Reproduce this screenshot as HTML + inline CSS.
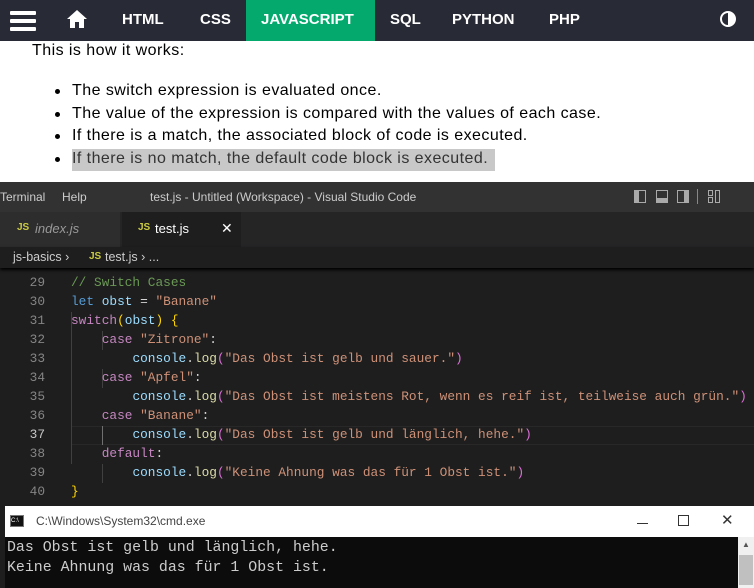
<!DOCTYPE html>
<html><head><meta charset="utf-8"><style>
*{margin:0;padding:0;box-sizing:border-box}
body{width:754px;height:588px;overflow:hidden;background:#fff;font-family:"Liberation Sans",sans-serif;position:relative}
.nav{position:absolute;top:0;left:0;width:754px;height:41px;background:#282A35;color:#fff;font-weight:bold;font-size:15px}
.nav span{position:absolute;top:11px}
.js{position:absolute;left:246px;top:0;width:129px;height:41px;background:#04AA6D}
.txt{position:absolute;font-size:16px;letter-spacing:0.45px;color:#000;white-space:nowrap}
.dot{position:absolute;left:55px;width:5px;height:5px;border-radius:50%;background:#000}
.vs{position:absolute;top:182px;left:0;width:754px;height:406px;background:#1e1e1e}
.title{position:absolute;top:0;left:0;width:754px;height:30px;background:#323233;color:#ccc;font-size:12px}
.tabs{position:absolute;top:30px;left:0;width:754px;height:35px;background:#252526}
.code{position:absolute;font-family:"Liberation Mono",monospace;font-size:12.8px;line-height:19px;white-space:pre;color:#d4d4d4}
.ln{position:absolute;left:20px;width:25px;text-align:right;color:#858585;font-family:"Liberation Mono",monospace;font-size:12.8px;line-height:19px}
.k{color:#c586c0}.b{color:#569cd6}.v{color:#9cdcfe}.s{color:#ce9178}.c{color:#6a9955}.f{color:#dcdcaa}.y{color:#ffd700}.p{color:#da70d6}
</style></head><body>
<div class="nav">
<div style="position:absolute;left:10px;top:11px;width:26px;height:4px;background:#fff;border-radius:1px;box-shadow:0 8px 0 #fff,0 16px 0 #fff"></div>
<svg style="position:absolute;left:66px;top:9px" width="22" height="20" viewBox="0 0 22 20"><path d="M11 1L1 10h3v9h5v-6h4v6h5v-9h3z" fill="#fff"/></svg>
<div class="js"></div>
<span style="left:122px">HTML</span><span style="left:200px">CSS</span><span style="left:261px">JAVASCRIPT</span><span style="left:390px">SQL</span><span style="left:452px">PYTHON</span><span style="left:549px">PHP</span>
<div style="position:absolute;left:720px;top:11px;width:16px;height:16px;border-radius:50%;border:2px solid #fff;background:linear-gradient(90deg,#282A35 50%,#fff 50%)"></div>
</div>
<div class="txt" style="left:32px;top:42px">This is how it works:</div>
<div class="dot" style="top:89px"></div><div class="dot" style="top:112px"></div><div class="dot" style="top:134px"></div><div class="dot" style="top:157px"></div>
<div class="txt" style="left:72px;top:82px">The switch expression is evaluated once.</div>
<div class="txt" style="left:72px;top:105px">The value of the expression is compared with the values of each case.</div>
<div class="txt" style="left:72px;top:127px">If there is a match, the associated block of code is executed.</div>
<div style="position:absolute;left:72px;top:149px;width:423px;height:22px;background:#c8c8c8"></div>
<div class="txt" style="left:72px;top:150px;color:#333">If there is no match, the default code block is executed.</div>
<div class="vs">
<div class="title"><span style="position:absolute;left:0;top:8px">Terminal</span><span style="position:absolute;left:62px;top:8px">Help</span><span style="position:absolute;left:150px;top:8px">test.js - Untitled (Workspace) - Visual Studio Code</span>
<div style="position:absolute;left:634px;top:8px;width:12px;height:13px;border:1.5px solid #aaa;border-left-width:5px"></div>
<div style="position:absolute;left:656px;top:8px;width:12px;height:13px;border:1.5px solid #aaa;border-bottom-width:5px"></div>
<div style="position:absolute;left:677px;top:8px;width:12px;height:13px;border:1.5px solid #aaa;border-right-width:5px"></div>
<div style="position:absolute;left:697px;top:7px;width:1px;height:15px;background:#888"></div>
<div style="position:absolute;left:708px;top:8px;width:5px;height:6px;border:1.5px solid #aaa"></div>
<div style="position:absolute;left:708px;top:15px;width:5px;height:6px;border:1.5px solid #aaa"></div>
<div style="position:absolute;left:715px;top:8px;width:5px;height:13px;border:1.5px solid #aaa"></div>
</div>
<div class="tabs">
<div style="position:absolute;left:0;top:0;width:120px;height:35px;background:#2d2d2d"></div>
<div style="position:absolute;left:122px;top:0;width:119px;height:35px;background:#1e1e1e"></div>
<span style="position:absolute;left:17px;top:10px;color:#cbcb41;font-size:10px;font-weight:bold">JS</span><span style="position:absolute;left:35px;top:9px;color:#999;font-size:13px;font-style:italic">index.js</span>
<span style="position:absolute;left:138px;top:10px;color:#cbcb41;font-size:10px;font-weight:bold">JS</span><span style="position:absolute;left:155px;top:9px;color:#fff;font-size:13px">test.js</span>
<span style="position:absolute;left:221px;top:8px;color:#fff;font-size:14px">✕</span>
</div>
<div style="position:absolute;left:0;top:65px;width:754px;height:21px;background:#1e1e1e;box-shadow:0 2px 3px #000;color:#ccc;font-size:12.5px">
<span style="position:absolute;left:13px;top:3px">js-basics ›</span><span style="position:absolute;left:89px;top:4px;color:#cbcb41;font-size:10px;font-weight:bold">JS</span><span style="position:absolute;left:105px;top:3px">test.js › ...</span></div>
<div style="position:absolute;left:71px;top:244px;width:683px;height:19px;border-top:1px solid #282828;border-bottom:1px solid #282828"></div>
<div style="position:absolute;left:71px;top:130px;width:1px;height:152px;background:#404040"></div>
<div style="position:absolute;left:102px;top:149px;width:1px;height:19px;background:#404040"></div>
<div style="position:absolute;left:102px;top:187px;width:1px;height:19px;background:#404040"></div>
<div style="position:absolute;left:102px;top:244px;width:1px;height:19px;background:#707070"></div>
<div style="position:absolute;left:102px;top:282px;width:1px;height:19px;background:#404040"></div>
<div class="ln" style="top:91px">29<br>30<br>31<br>32<br>33<br>34<br>35<br>36<br><span style="color:#c6c6c6">37</span><br>38<br>39<br>40</div>
<div class="code" style="left:71px;top:91px"><span class="c">// Switch Cases</span>
<span class="b">let</span> <span class="v">obst</span> = <span class="s">"Banane"</span>
<span class="k">switch</span><span class="y">(</span><span class="v">obst</span><span class="y">)</span> <span class="y">{</span>
    <span class="k">case</span> <span class="s">"Zitrone"</span>:
        <span class="v">console</span>.<span class="f">log</span><span class="p">(</span><span class="s">"Das Obst ist gelb und sauer."</span><span class="p">)</span>
    <span class="k">case</span> <span class="s">"Apfel"</span>:
        <span class="v">console</span>.<span class="f">log</span><span class="p">(</span><span class="s">"Das Obst ist meistens Rot, wenn es reif ist, teilweise auch grün."</span><span class="p">)</span>
    <span class="k">case</span> <span class="s">"Banane"</span>:
        <span class="v">console</span>.<span class="f">log</span><span class="p">(</span><span class="s">"Das Obst ist gelb und länglich, hehe."</span><span class="p">)</span>
    <span class="k">default</span>:
        <span class="v">console</span>.<span class="f">log</span><span class="p">(</span><span class="s">"Keine Ahnung was das für 1 Obst ist."</span><span class="p">)</span>
<span class="y">}</span></div>
</div>
<div style="position:absolute;left:5px;top:506px;width:749px;height:82px;background:#fff">
<div style="position:absolute;left:5px;top:9px;width:14px;height:12px;background:#111;border:1px solid #777;color:#fff;font-size:6px;line-height:10px">C:\</div>
<span style="position:absolute;left:31px;top:8px;font-size:12px;color:#444">C:\Windows\System32\cmd.exe</span>
<div style="position:absolute;left:632px;top:17px;width:11px;height:1px;background:#333"></div>
<div style="position:absolute;left:673px;top:9px;width:11px;height:11px;border:1px solid #333"></div>
<span style="position:absolute;left:716px;top:5px;font-size:15px;color:#333">✕</span>
<div style="position:absolute;left:0;top:31px;width:733px;height:51px;background:#0c0c0c"></div>
<div style="position:absolute;left:733px;top:31px;width:16px;height:51px;background:#f0f0f0"><div style="position:absolute;left:1px;top:18px;width:14px;height:30px;background:#c0c0c0"></div><span style="position:absolute;left:4px;top:3px;font-size:8px;color:#555">▲</span></div>
<div style="position:absolute;left:2px;top:33px;color:#ccc;font-family:'Liberation Mono',monospace;font-size:14.9px;line-height:19.5px;white-space:pre">Das Obst ist gelb und länglich, hehe.
Keine Ahnung was das für 1 Obst ist.</div>
</div>
</body></html>
